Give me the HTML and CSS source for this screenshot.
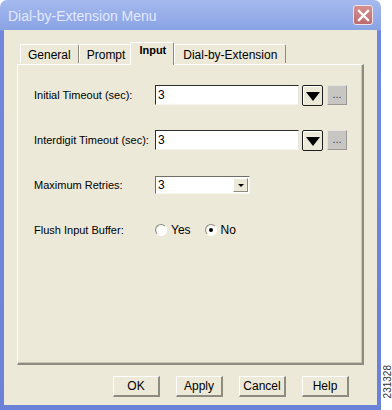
FILE: index.html
```html
<!DOCTYPE html>
<html lang="en">

<head>
    <meta charset="UTF-8">
    <title>Dial-by-Extension Menu</title>
    <link rel="stylesheet" href="styles.css">
</head>

<body>
    <div class="screen">
        <div class="window">
            <div class="titlebar">
                <span class="title">Dial-by-Extension Menu</span>
                <div class="close">
                    <svg width="13" height="13" viewBox="0 0 13 13">
                        <path d="M2 2 L11 11 M11 2 L2 11" stroke="#fff" stroke-width="2.4" stroke-linecap="square" />
                    </svg>
                </div>
            </div>
            <div class="client">
                <div class="tabs">
                    <div class="tab">General</div>
                    <div class="tab">Prompt</div>
                    <div class="tab active">Input</div>
                    <div class="tab">Dial-by-Extension</div>
                </div>
                <div class="panel">
                    <div class="row">
                        <label>Initial Timeout (sec):</label>
                        <div class="field">
                            <div class="textbox">3</div>
                            <div class="drop-btn"><span class="arrow"></span></div>
                            <div class="more-btn">...</div>
                        </div>
                    </div>
                    <div class="row">
                        <label>Interdigit Timeout (sec):</label>
                        <div class="field">
                            <div class="textbox">3</div>
                            <div class="drop-btn"><span class="arrow"></span></div>
                            <div class="more-btn">...</div>
                        </div>
                    </div>
                    <div class="row">
                        <label>Maximum Retries:</label>
                        <div class="field">
                            <div class="combo">
                                <span class="combo-value">3</span>
                                <span class="combo-btn"><span class="small-arrow"></span></span>
                            </div>
                        </div>
                    </div>
                    <div class="row">
                        <label>Flush Input Buffer:</label>
                        <div class="field radios">
                            <span class="radio"><span class="dot"></span>Yes</span>
                            <span class="radio checked"><span class="dot"></span>No</span>
                        </div>
                    </div>
                </div>
                <div class="actions">
                    <button class="btn">OK</button>
                    <button class="btn">Apply</button>
                    <button class="btn">Cancel</button>
                    <button class="btn">Help</button>
                </div>
            </div>
        </div>
        <div class="fig-id">231328</div>
    </div>
</body>

</html>
```

FILE: styles.css
```css
/* Global styles */
* {
    box-sizing: border-box;
    margin: 0;
    padding: 0;
}

body {
    background-color: #ffffff;
    font-family: "Liberation Sans", Arial, sans-serif;
    font-size: 11px;
    color: #000;
}

.screen {
    width: 392px;
    height: 410px;
    display: flex;
    align-items: flex-start;
}

/* Window frame */
.window {
    width: 381px;
    height: 410px;
    background: linear-gradient(#a5b9ee, #8aa3e4 30px, #7088dc 31px, #6a82d8);
    border-radius: 7px 7px 0 0;
    padding: 0 4px 5px 4px;
    display: flex;
    flex-direction: column;
}

.titlebar {
    height: 30px;
    display: flex;
    align-items: center;
    justify-content: space-between;
    padding: 0 4px 0 4px;
}

.title {
    color: #e2eaff;
    font-family: "Liberation Sans", Arial, sans-serif;
    font-size: 14px;
    padding-top: 1px;
}

.close {
    width: 20px;
    height: 20px;
    background: linear-gradient(#d6908f, #bd6a6d);
    border: 1px solid #eee3e6;
    border-radius: 3px;
    display: flex;
    align-items: center;
    justify-content: center;
}

.client {
    flex: 1;
    background-color: #ece9d8;
    padding: 11px 13px 0 13px;
    display: flex;
    flex-direction: column;
}

/* Tabs */
.tabs {
    display: flex;
    padding-left: 3px;
    height: 23px;
    align-items: flex-end;
    position: relative;
    z-index: 1;
}

.tab {
    font-size: 12px;
    height: 19px;
    padding: 3px 7px 0 7px;
    border-top: 1px solid #fff;
    border-left: 1px solid #fff;
    border-right: 1px solid #8e8c80;
    border-radius: 2px 2px 0 0;
    margin-bottom: 1px;
    color: #000;
}

.tab:nth-child(2) {
    border-right: none;
    padding-right: 5px;
}

.tab:last-child {
    padding: 3px 8px 0 8px;
}

.tab.active {
    height: 23px;
    margin-bottom: -1px;
    padding: 1px 7px 0 8px;
    font-weight: bold;
    font-size: 11px;
    background-color: #ece9d8;
}

.panel {
    width: 347px;
    height: 301px;
    border-top: 1px solid #fff;
    border-left: 1px solid #fff;
    border-right: 2px solid #8e8c80;
    border-bottom: 2px solid #8e8c80;
    box-shadow: inset -1px -1px 0 #c9c6b4;
    padding: 20px 0 0 16px;
    display: flex;
    flex-direction: column;
    gap: 25px;
}

.row {
    display: flex;
    align-items: center;
    height: 20px;
}

.row label {
    width: 121px;
}

.field {
    display: flex;
    align-items: center;
}

.textbox {
    width: 144px;
    height: 20px;
    background-color: #fff;
    border-top: 1px solid #2c2c2c;
    border-left: 1px solid #2c2c2c;
    border-bottom: 1px solid #f4f3ee;
    border-right: 1px solid #e8e6dc;
    font-size: 12px;
    padding: 1px 2px;
    line-height: 16px;
}

.drop-btn {
    width: 21px;
    height: 21px;
    margin-left: 3px;
    background-color: #ece9d8;
    border: 1px solid #1e1e1e;
    border-radius: 2px;
    box-shadow: inset 1px 1px 0 #fff;
    display: flex;
    align-items: center;
    justify-content: center;
}

.arrow {
    width: 0;
    height: 0;
    border-left: 7px solid transparent;
    border-right: 7px solid transparent;
    border-top: 9px solid #000;
    margin-top: 2px;
}

.more-btn {
    width: 20px;
    height: 20px;
    margin-left: 4px;
    background-color: #c7c6c2;
    border-top: 1px solid #e4e3df;
    border-left: 1px solid #e4e3df;
    border-right: 1px solid #9a9992;
    border-bottom: 1px solid #9a9992;
    color: #3c3c3c;
    font-size: 11px;
    text-align: center;
    line-height: 17px;
}

.combo {
    width: 95px;
    height: 18px;
    background-color: #fff;
    border-top: 1px solid #6f6d64;
    border-left: 1px solid #6f6d64;
    border-bottom: 1px solid #f8f7f2;
    border-right: 1px solid #f8f7f2;
    display: flex;
    align-items: center;
    justify-content: space-between;
    font-size: 12px;
    padding-left: 2px;
}

.combo-btn {
    width: 15px;
    height: 14px;
    margin-right: 1px;
    background-color: #ece9d8;
    border-top: 1px solid #fff;
    border-left: 1px solid #fff;
    border-right: 1px solid #8e8c80;
    border-bottom: 1px solid #8e8c80;
    display: flex;
    align-items: center;
    justify-content: center;
}

.small-arrow {
    width: 0;
    height: 0;
    border-left: 3px solid transparent;
    border-right: 3px solid transparent;
    border-top: 3px solid #000;
}

.radios {
    gap: 14px;
}

.radio {
    display: flex;
    align-items: center;
    gap: 4px;
    font-size: 12px;
}

.radio .dot {
    width: 12px;
    height: 12px;
    border-radius: 50%;
    background: radial-gradient(circle at 60% 60%, #fff 40%, #e4e2d8);
    border-top: 1px solid #8f8d84;
    border-left: 1px solid #8f8d84;
    border-right: 1px solid #fff;
    border-bottom: 1px solid #fff;
    position: relative;
}

.radio.checked .dot::after {
    content: "";
    position: absolute;
    left: 3px;
    top: 3px;
    width: 4px;
    height: 4px;
    border-radius: 50%;
    background-color: #000;
}

/* Bottom buttons */
.actions {
    display: flex;
    gap: 16px;
    padding: 11px 0 0 96px;
}

.btn {
    width: 47px;
    height: 21px;
    font-family: "Liberation Sans", Arial, sans-serif;
    font-size: 12px;
    background-color: #ece9d8;
    border-top: 1px solid #fff;
    border-left: 1px solid #fff;
    border-right: 2px solid #8e8c80;
    border-bottom: 2px solid #8e8c80;
    color: #000;
}

.fig-id {
    writing-mode: vertical-rl;
    transform: rotate(180deg);
    font-size: 10px;
    line-height: 9px;
    width: 9px;
    color: #333;
    margin-top: 365px;
    margin-left: 2px;
}
```
